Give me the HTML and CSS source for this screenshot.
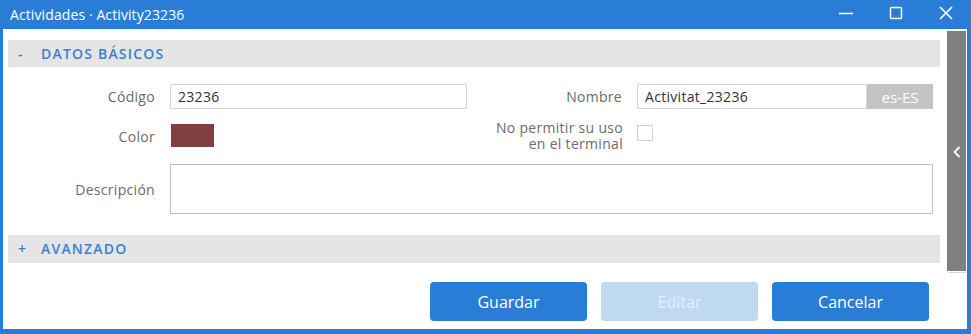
FILE: index.html
```html
<!DOCTYPE html>
<html lang="es">
<head>
<meta charset="utf-8">
<title>Actividades</title>
<link rel="stylesheet" href="styles.css">
</head>
<body>
<div class="window">
  <header class="titlebar">
    <span class="title">Actividades · Activity23236</span>
    <div class="controls">
      <button class="ctl" aria-label="Minimizar">
        <svg width="16" height="16" viewBox="0 0 16 16"><path d="M1 8.5h14" stroke="#fff" stroke-width="1.6" fill="none"/></svg>
      </button>
      <button class="ctl" aria-label="Maximizar">
        <svg width="16" height="16" viewBox="0 0 16 16"><rect x="2.5" y="2.5" width="11" height="11" rx="1" stroke="#fff" stroke-width="1.5" fill="none"/></svg>
      </button>
      <button class="ctl" aria-label="Cerrar">
        <svg width="16" height="16" viewBox="0 0 16 16"><path d="M2 2L14 14M14 2L2 14" stroke="#fff" stroke-width="1.7" fill="none"/></svg>
      </button>
    </div>
  </header>
  <div class="body">
    <main class="main">
      <div class="section-head"><span class="toggle">-</span><span>DATOS BÁSICOS</span></div>
      <div class="form">
        <label class="lbl">Código</label>
        <div class="field"><input class="input" value="23236"></div>
        <label class="lbl">Nombre</label>
        <div class="field group"><input class="input grow" value="Activitat_23236"><span class="addon">es-ES</span></div>

        <label class="lbl">Color</label>
        <div class="field"><span class="swatch"></span></div>
        <label class="lbl two"><span class="ln">No permitir su uso</span><span class="ln">en el terminal</span></label>
        <div class="field top"><span class="check"></span></div>

        <label class="lbl">Descripción</label>
        <div class="field span3"><textarea class="textarea"></textarea></div>
      </div>
      <div class="section-head adv"><span class="toggle">+</span><span>AVANZADO</span></div>
      <div class="actions">
        <button class="btn">Guardar</button>
        <button class="btn disabled">Editar</button>
        <button class="btn">Cancelar</button>
      </div>
    </main>
    <aside class="side">
      <div class="side-panel">
        <svg width="8" height="12" viewBox="0 0 8 12"><path d="M6.5 1L1.5 6l5 5" stroke="#fff" stroke-width="1.8" fill="none"/></svg>
      </div>
      <div class="side-line"></div>
    </aside>
  </div>
</div>
</body>
</html>
```

FILE: styles.css
```css
* { box-sizing: border-box; }
html, body { margin: 0; padding: 0; }
body {
  width: 971px;
  height: 334px;
  background: #fff;
  font-family: "Open Sans", "DejaVu Sans", sans-serif;
  overflow: hidden;
}
.window {
  width: 971px;
  height: 334px;
  border-left: 3px solid #2a7dd6;
  border-right: 4px solid #2a7dd6;
  border-bottom: 5px solid #2a7dd6;
  display: flex;
  flex-direction: column;
  background: #fff;
}
.titlebar {
  height: 29px;
  margin-left: -3px;
  margin-right: -4px;
  background: #2a7dd6;
  display: flex;
  align-items: center;
  justify-content: space-between;
  padding-left: 10px;
  flex: none;
}
.title {
  color: #fff;
  font-size: 14px;
  letter-spacing: 0.1px;
}
.controls { display: flex; height: 100%; }
.ctl {
  width: 50px;
  height: 29px;
  border: 0;
  background: transparent;
  padding: 0;
  display: flex;
  align-items: center;
  justify-content: center;
  margin-top: -2px;
}
.body {
  flex: 1;
  display: flex;
  min-height: 0;
}
.main {
  flex: 1;
  padding: 11px 7px 0 5px;
  display: flex;
  flex-direction: column;
}
.section-head {
  height: 27px;
  background: #e5e5e5;
  display: flex;
  align-items: center;
  color: #3a7fd6;
  font-size: 14px;
  letter-spacing: 1.2px;
  font-weight: 600;
  padding-left: 10px;
  padding-bottom: 1px;
}
.section-head .toggle { width: 23px; }
.section-head.adv { height: 28px; margin-top: 21px; }
.form {
  display: grid;
  grid-template-columns: 162px 297px 170px 296px;
  grid-template-rows: 25px 31px 50px;
  row-gap: 12px;
  margin-top: 17px;
  width: 925px;
}
.lbl {
  text-align: right;
  padding-right: 15px;
  color: #6b6b6b;
  font-size: 14px;
  letter-spacing: 0.3px;
  display: flex;
  align-items: center;
  justify-content: flex-end;
  line-height: 15px;
}
.lbl.two {
  padding-right: 14px;
  margin-top: -2px;
  flex-direction: column;
  align-items: flex-end;
  justify-content: center;
}
.lbl.two .ln { display: block; height: 15.5px; line-height: 15.5px; }
.field { display: flex; align-items: center; }
.field.top { align-items: flex-start; padding-top: 4px; }
.span3 { grid-column: 2 / 5; }
.input {
  width: 100%;
  height: 25px;
  border: 1px solid #d6d6d6;
  padding: 0 7px;
  font-family: inherit;
  font-size: 14px;
  letter-spacing: 0.3px;
  color: #333;
  outline: none;
}
.group .grow { flex: 1; width: auto; min-width: 0; }
.addon {
  width: 66px;
  height: 25px;
  background: #c4c4c4;
  color: #fff;
  font-size: 15px;
  display: flex;
  align-items: center;
  justify-content: center;
}
.swatch {
  width: 43px;
  height: 23px;
  background: #7f4040;
  margin-left: 1px;
  margin-top: -2px;
}
.check {
  width: 16px;
  height: 16px;
  border: 1px solid #d3d3d3;
  background: #fff;
}
.textarea {
  width: 100%;
  height: 50px;
  border: 1px solid #c2c2c2;
  resize: none;
  outline: none;
}
.actions {
  display: flex;
  justify-content: flex-end;
  gap: 14px;
  margin-top: 19px;
  padding-right: 11px;
}
.btn {
  width: 157px;
  height: 39px;
  border: 0;
  border-radius: 4px;
  background: #2a7dd6;
  color: #fff;
  font-family: "Open Sans", Roboto, sans-serif;
  font-size: 16px;
}
.btn.disabled { background: #bfd9f0; color: #e6f0fa; }
.side {
  width: 20px;
  display: flex;
  flex-direction: column;
  padding-top: 2px;
}
.side-panel {
  width: 19px;
  height: 240px;
  background: #808080;
  display: flex;
  align-items: center;
  justify-content: center;
  padding-top: 2px;
}
.side-line {
  width: 17px;
  margin-left: 2px;
  height: 1px;
  margin-top: 1px;
  background: #d8d8d8;
}
```
